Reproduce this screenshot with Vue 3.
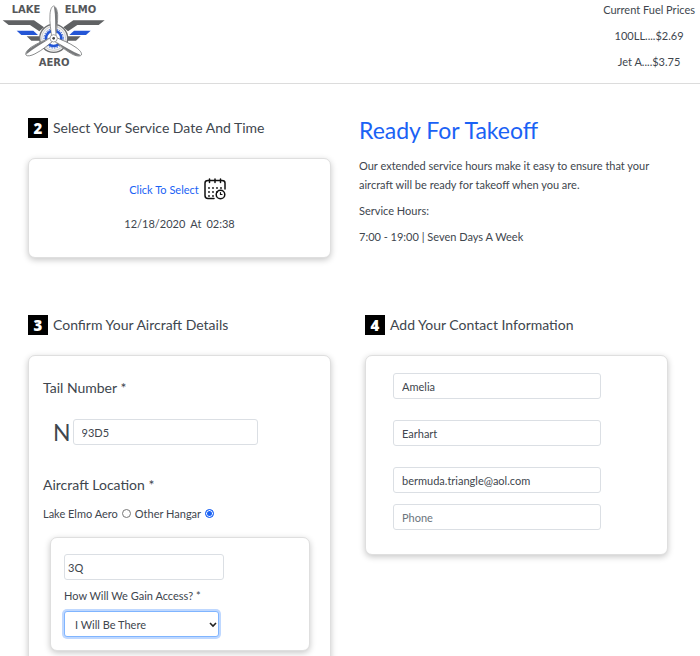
<script setup>
import { ref } from 'vue'

const prices = ['100LL....$2.69', 'Jet A....$3.75']
const tail = ref('93D5')
const location = ref('other')
const hangar = ref('3Q')
const access = ref('there')
const contact = ref([
  { id: 'first', label: 'First Name', type: 'text', value: 'Amelia' },
  { id: 'last', label: 'Last Name', type: 'text', value: 'Earhart' },
  { id: 'email', label: 'Email', type: 'email', value: 'bermuda.triangle@aol.com' },
  { id: 'phone', label: 'Phone', type: 'tel', value: '' },
])
const dots = [
  [9, 10], [13, 10], [17, 10],
  [5, 10], [5, 14], [9, 14], [13, 14],
  [5, 18], [9, 18],
]
</script>

<template>
  <div class="page">
    <header class="top">
      <a href="#" class="brand" aria-label="Lake Elmo Aero">
        <svg class="logo" viewBox="0 0 324 216">
          <g class="logo-text">
            <text x="35" y="38">LAKE</text>
            <text x="194" y="38">ELMO</text>
            <text x="116" y="198">AERO</text>
          </g>
          <g fill="#606264">
            <path d="M8 61H102L132 82L118 94L90 75H26Z" />
            <path d="M314 61H220L190 82L204 94L232 75H296Z" />
            <path d="M80 109H120V122H94Z" />
            <path d="M242 109H202V122H228Z" />
          </g>
          <g fill="#2456d6">
            <path d="M50 92H100L114 105H64Z" />
            <path d="M272 92H222L208 105H258Z" />
          </g>
          <circle cx="161" cy="115" r="42" fill="#f4f4f4" stroke="#6d6f71" stroke-width="4" />
          <circle cx="161" cy="115" r="36" fill="none" stroke="#b9bbbd" stroke-width="2" />
          <circle cx="161" cy="115" r="23" fill="#fff" stroke="#2456d6" stroke-width="8" />
          <circle cx="161" cy="115" r="29" fill="none" stroke="#2456d6" stroke-width="3" stroke-dasharray="4 4" />
          <g stroke="#606264" stroke-width="2">
            <g v-for="angle in [0, 121, 239]" :key="angle" :transform="`rotate(${angle} 161 115)`">
              <path fill="#fff" d="M155 110C153 91 148 68 150 43C151 29 155 19 161 18C168 19 172 30 173 44C174 68 169 91 167 110Z" />
              <path fill="#77797b" stroke="none" d="M162 20C169 22 172 32 172 45C173 68 168 91 166 104C165 79 167 48 162 20Z" />
            </g>
          </g>
          <circle cx="161" cy="115" r="11" fill="#fff" stroke="#77797b" stroke-width="2" />
          <circle cx="161" cy="115" r="4" fill="#444" />
        </svg>
      </a>
      <div class="fuel">
        <p>Current Fuel Prices</p>
        <p v-for="price in prices" :key="price">{{ price }}</p>
      </div>
    </header>

    <main>
      <section class="row schedule">
        <div>
          <h2 class="step"><span class="badge">2</span>Select Your Service Date And Time</h2>
          <div class="card date-card">
            <button type="button" class="pick">
              Click To Select
              <svg class="calendar" viewBox="0 0 22 22" fill="none" stroke="#111" stroke-width="1.5" stroke-linecap="round">
                <path d="M10 20.500H4Q1 20.500 1 17.500V5Q1 2.500 4 2.500H18Q21 2.500 21 5V11" />
                <path d="M5.500 1V4.500M11 1V4.500M16.500 1V4.500" />
                <circle cx="16.500" cy="16.500" r="4.300" />
                <path d="M16.500 14.500V16.500H18" stroke-width="1.200" />
                <g fill="#111" stroke="none">
                  <circle v-for="([x, y], i) in dots" :key="i" :cx="x" :cy="y" r="0.900" />
                </g>
              </svg>
            </button>
            <p class="chosen"><span>12/18/2020</span><span>At</span><span>02:38</span></p>
          </div>
        </div>
        <div class="intro">
          <h1>Ready For Takeoff</h1>
          <p>Our extended service hours make it easy to ensure that your aircraft will be ready for takeoff when you are.</p>
          <p>Service Hours:</p>
          <p>7:00 - 19:00 | Seven Days A Week</p>
        </div>
      </section>

      <form class="row details" @submit.prevent>
        <div>
          <h2 class="step"><span class="badge">3</span>Confirm Your Aircraft Details</h2>
          <div class="card aircraft">
            <label class="title" for="tail">Tail Number *</label>
            <div class="tail">
              <span class="prefix">N</span>
              <input id="tail" v-model="tail" class="field" type="text" />
            </div>
            <fieldset>
              <legend class="title">Aircraft Location *</legend>
              <div class="choices">
                <label for="aero">Lake Elmo Aero</label>
                <input id="aero" v-model="location" type="radio" name="location" value="aero" />
                <label for="other">Other Hangar</label>
                <input id="other" v-model="location" type="radio" name="location" value="other" />
              </div>
            </fieldset>
            <div class="card hangar">
              <input v-model="hangar" class="field tight" type="text" aria-label="Hangar" />
              <label for="access">How Will We Gain Access? *</label>
              <div class="select">
                <select id="access" v-model="access">
                  <option value="there">I Will Be There</option>
                </select>
                <svg viewBox="0 0 8 6" fill="none" stroke="#222" stroke-width="1.600"><path d="M1 1L4 4L7 1" /></svg>
              </div>
            </div>
          </div>
        </div>
        <div>
          <h2 class="step"><span class="badge">4</span>Add Your Contact Information</h2>
          <div class="card contact">
            <input
              v-for="item in contact"
              :id="item.id"
              :key="item.id"
              v-model="item.value"
              class="field"
              :class="item.id"
              :type="item.type"
              :placeholder="item.label"
              :aria-label="item.label"
            />
          </div>
        </div>
      </form>
    </main>
  </div>
</template>

<style>
body {
  margin: 0;
  background: #fff;
}
</style>

<style scoped>
* {
  box-sizing: border-box;
}
.page {
  overflow: hidden auto;
  scrollbar-width: none;
  height: 100vh;
  font: 11px/19px Lato, "Open Sans", sans-serif;
  color: #40464e;
}
p,
h1,
h2 {
  margin: 0;
  font-weight: 400;
}
.top {
  display: flex;
  justify-content: space-between;
  align-items: flex-start;
  min-height: 84px;
  padding: 0 5px 0 0;
  border-bottom: 1px solid #dcdcdc;
}
.brand {
  display: block;
}
.logo {
  display: block;
  width: 108px;
  height: 72px;
}
.logo-text {
  font: bold 30px "DejaVu Sans", sans-serif;
  fill: #55575a;
}
.fuel {
  display: grid;
  gap: 7px;
  text-align: center;
}
.row {
  display: grid;
  grid-template-columns: 1fr 1fr;
}
.schedule {
  gap: 28px;
  padding: 34px 38px 0 28px;
}
.details {
  gap: 34px;
  align-items: start;
  padding: 57px 32px 24px 28px;
}
.step {
  display: flex;
  align-items: center;
  gap: 5px;
  font-size: 14px;
  line-height: 20px;
}
.badge {
  width: 20px;
  height: 20px;
  background: #000;
  color: #fff;
  font: 800 15px/20px "Open Sans", sans-serif;
  text-align: center;
}
.card {
  margin-top: 20px;
  border: 1px solid #dfdfdf;
  border-radius: 7px;
  background: #fff;
  box-shadow: 0 2px 6px rgba(0, 0, 0, 0.22);
}
.date-card {
  display: flex;
  flex-direction: column;
  align-items: center;
  gap: 14px;
  min-height: 100px;
  padding-top: 19px;
}
.pick {
  display: flex;
  align-items: center;
  gap: 5px;
  padding: 0 4px 0 0;
  border: 0;
  background: none;
  font: inherit;
  color: #1a62f5;
}
.calendar {
  width: 22px;
  height: 22px;
}
.chosen {
  display: flex;
  gap: 5px;
}
.intro {
  display: grid;
  align-content: start;
  gap: 7px;
}
.intro h1 {
  margin-bottom: 7px;
  font-size: 23px;
  line-height: 24px;
  color: #1a62f5;
}
.aircraft {
  padding: 22px 20px 20px 14px;
}
.title {
  display: block;
  padding: 0;
  font-size: 14px;
  line-height: 20px;
}
.tail {
  display: flex;
  align-items: center;
  gap: 2px;
  margin: 21px 0 30px 10px;
}
.prefix {
  font-size: 23px;
}
.field {
  height: 26px;
  padding: 0 8px;
  border: 1px solid #dbdfe4;
  border-radius: 3px;
  background: #fff;
  font: inherit;
  color: #40464e;
}
.field::placeholder {
  color: #6c757d;
}
.tail .field {
  width: 72%;
}
fieldset {
  margin: 0;
  padding: 0;
  border: 0;
}
.choices {
  display: flex;
  align-items: center;
  gap: 4px;
  margin-top: 9px;
}
.choices input {
  appearance: none;
  width: 9px;
  height: 9px;
  margin: 0;
  border: 1px solid #777;
  border-radius: 50%;
}
.choices input:checked {
  border-color: #1a62f5;
  background: #1a62f5;
  box-shadow: inset 0 0 0 1px #fff;
}
.hangar {
  display: grid;
  gap: 6px;
  margin: 14px 0 0 7px;
  padding: 16px 13px 13px;
}
.tight {
  width: 69%;
  padding: 0 3px;
}
.select {
  position: relative;
  width: 67%;
}
.select select {
  appearance: none;
  display: block;
  width: 100%;
  height: 26px;
  padding: 0 10px;
  border: 1px solid #80b5ff;
  border-radius: 3px;
  background: #fff;
  box-shadow: 0 0 0 2px #bfd8ff;
  font: inherit;
  color: #40464e;
}
.select svg {
  position: absolute;
  top: 11px;
  right: 2px;
  width: 8px;
  height: 6px;
  pointer-events: none;
}
.contact {
  display: grid;
  gap: 21px;
  padding: 17px 66px 24px 27px;
}
.email {
  margin-bottom: -10px;
}
</style>
